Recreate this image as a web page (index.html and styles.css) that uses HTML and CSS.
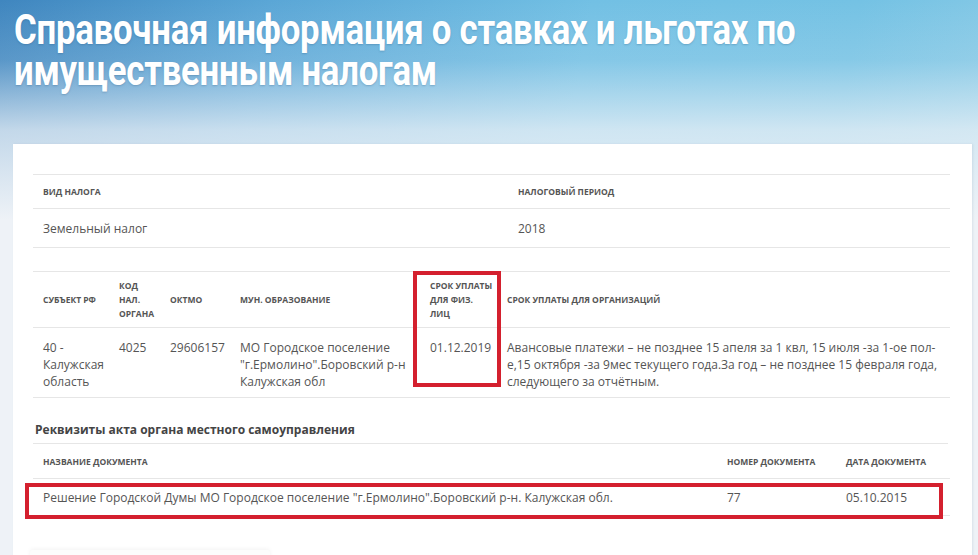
FILE: index.html
```html
<!DOCTYPE html>
<html lang="ru">
<head>
<meta charset="utf-8">
<title>Справочная информация</title>
<link rel="stylesheet" href="styles.css">
</head>
<body>
<div class="page">
  <header class="hero">
    <h1 class="title">Справочная информация о ставках и льготах по<br>имущественным налогам</h1>
  </header>
  <main class="card">
    <table class="tbl t1">
      <colgroup><col class="c-vid"><col></colgroup>
      <thead><tr><th>Вид налога</th><th>Налоговый период</th></tr></thead>
      <tbody><tr><td>Земельный налог</td><td>2018</td></tr></tbody>
    </table>

    <table class="tbl t2">
      <colgroup>
        <col class="c-subj"><col class="c-kod"><col class="c-oktmo"><col class="c-mun"><col class="c-fiz"><col>
      </colgroup>
      <thead>
        <tr>
          <th>Субъект РФ</th>
          <th>Код<br>нал.<br>органа</th>
          <th>ОКТМО</th>
          <th>Мун. образование</th>
          <th>Срок уплаты<br>для физ.<br>лиц</th>
          <th>Срок уплаты для организаций</th>
        </tr>
      </thead>
      <tbody>
        <tr>
          <td>40 -<br>Калужская<br>область</td>
          <td>4025</td>
          <td>29606157</td>
          <td>МО Городское поселение<br>"г.Ермолино".Боровский р-н<br>Калужская обл</td>
          <td>01.12.2019</td>
          <td class="nowrap">Авансовые платежи – не позднее 15 апеля за 1 квл, 15 июля -за 1-ое пол-<br>е,15 октября -за 9мес текущего года.За год – не позднее 15 февраля года,<br>следующего за отчётным.</td>
        </tr>
      </tbody>
    </table>

    <h2 class="section">Реквизиты акта органа местного самоуправления</h2>

    <table class="tbl t3">
      <colgroup><col class="c-name"><col class="c-num"><col></colgroup>
      <thead><tr><th>Название документа</th><th>Номер документа</th><th>Дата документа</th></tr></thead>
      <tbody><tr><td>Решение Городской Думы МО Городское поселение "г.Ермолино".Боровский р-н. Калужская обл.</td><td>77</td><td>05.10.2015</td></tr></tbody>
    </table>

    <div class="btn-shadow"></div>

    <div class="mark mark-col"></div>
    <div class="mark mark-row"></div>
  </main>
</div>
</body>
</html>
```

FILE: styles.css
```css
html, body {
  margin: 0;
  padding: 0;
}
body {
  width: 978px;
  height: 555px;
  overflow: hidden;
  font-family: "Open Sans", "DejaVu Sans", sans-serif;
  color: #555;
  background: #eef2f7;
}
.page {
  position: relative;
  min-height: 555px;
  background:
    linear-gradient(180deg, rgba(238,242,247,0) 0px, rgba(238,242,247,0.15) 60px, rgba(238,242,247,0.75) 130px, #eef2f7 220px),
    linear-gradient(100deg, #3f86bf 0%, #5aa6d6 25%, #72c0e4 55%, #74c2e4 80%, #8bcbe6 100%);
}
.hero {
  height: 144px;
  padding: 0 0 0 14px;
  box-sizing: border-box;
  overflow: hidden;
}
.title {
  margin: 0;
  padding-top: 9px;
  width: 1200px;
  white-space: nowrap;
  font-family: "Roboto", "Liberation Sans", sans-serif;
  font-weight: 700;
  font-size: 43px;
  line-height: 41px;
  color: #fff;
  letter-spacing: -0.3px;
  transform: scaleX(0.808);
  transform-origin: 0 0;
  text-shadow: 0 1px 2px rgba(30, 70, 110, 0.25);
}
.card {
  position: relative;
  margin-left: 13px;
  width: 959px;
  min-height: 411px;
  background: #fff;
  padding: 30px 22px 0 20px;
  box-sizing: border-box;
  box-shadow: 1px 0 2px rgba(150, 170, 190, 0.25);
}
.tbl {
  width: 917px;
  border-collapse: collapse;
  table-layout: fixed;
}
.tbl th, .tbl td {
  text-align: left;
  padding: 0 0 0 10px;
  border-bottom: 1px solid #e6e6e6;
}
.tbl thead tr {
  border-top: 1px solid #e6e6e6;
}
.tbl th {
  font-size: 8.5px;
  font-weight: 700;
  text-transform: uppercase;
  letter-spacing: 0;
  color: #555;
  vertical-align: middle;
}
.tbl td {
  font-size: 12px;
  color: #555;
  vertical-align: top;
}
.nowrap { white-space: nowrap; }
.t1 th { height: 33px; }
.t1 td { height: 38px; vertical-align: middle; }
.c-vid { width: 475px; }

.t2 { margin-top: 23px; }
.t2 th { height: 55px; line-height: 14px; }
.t2 td { height: 70px; line-height: 17px; padding-top: 11px; padding-bottom: 0; box-sizing: border-box; }
.c-subj { width: 76px; }
.c-kod { width: 51px; }
.c-oktmo { width: 70px; }
.c-mun { width: 190px; }
.c-fiz { width: 77px; }

.section {
  margin: 0;
  padding: 23px 0 0 2px;
  height: 46px;
  box-sizing: border-box;
  font-size: 12px;
  font-weight: 700;
  color: #444;
  border-bottom: 1px solid #e6e6e6;
  width: 915px;
}
.t3 thead tr { border-top: none; }
.t3 th { height: 34px; }
.t3 td { height: 36px; vertical-align: middle; }
.c-name { width: 684px; }
.c-num { width: 119px; }

.btn-shadow {
  margin: 34px 0 0 -3px;
  width: 240px;
  height: 10px;
  border-radius: 3px;
  box-shadow: 0 -1px 4px rgba(0, 0, 0, 0.05);
  background: #fcfcfc;
}

.mark {
  position: absolute;
  border: 4px solid #d4202e;
  box-sizing: border-box;
}
.mark-col {
  left: 400px;
  top: 127px;
  width: 88px;
  height: 116px;
}
.mark-row {
  left: 12px;
  top: 339px;
  width: 918px;
  height: 36px;
}
```
